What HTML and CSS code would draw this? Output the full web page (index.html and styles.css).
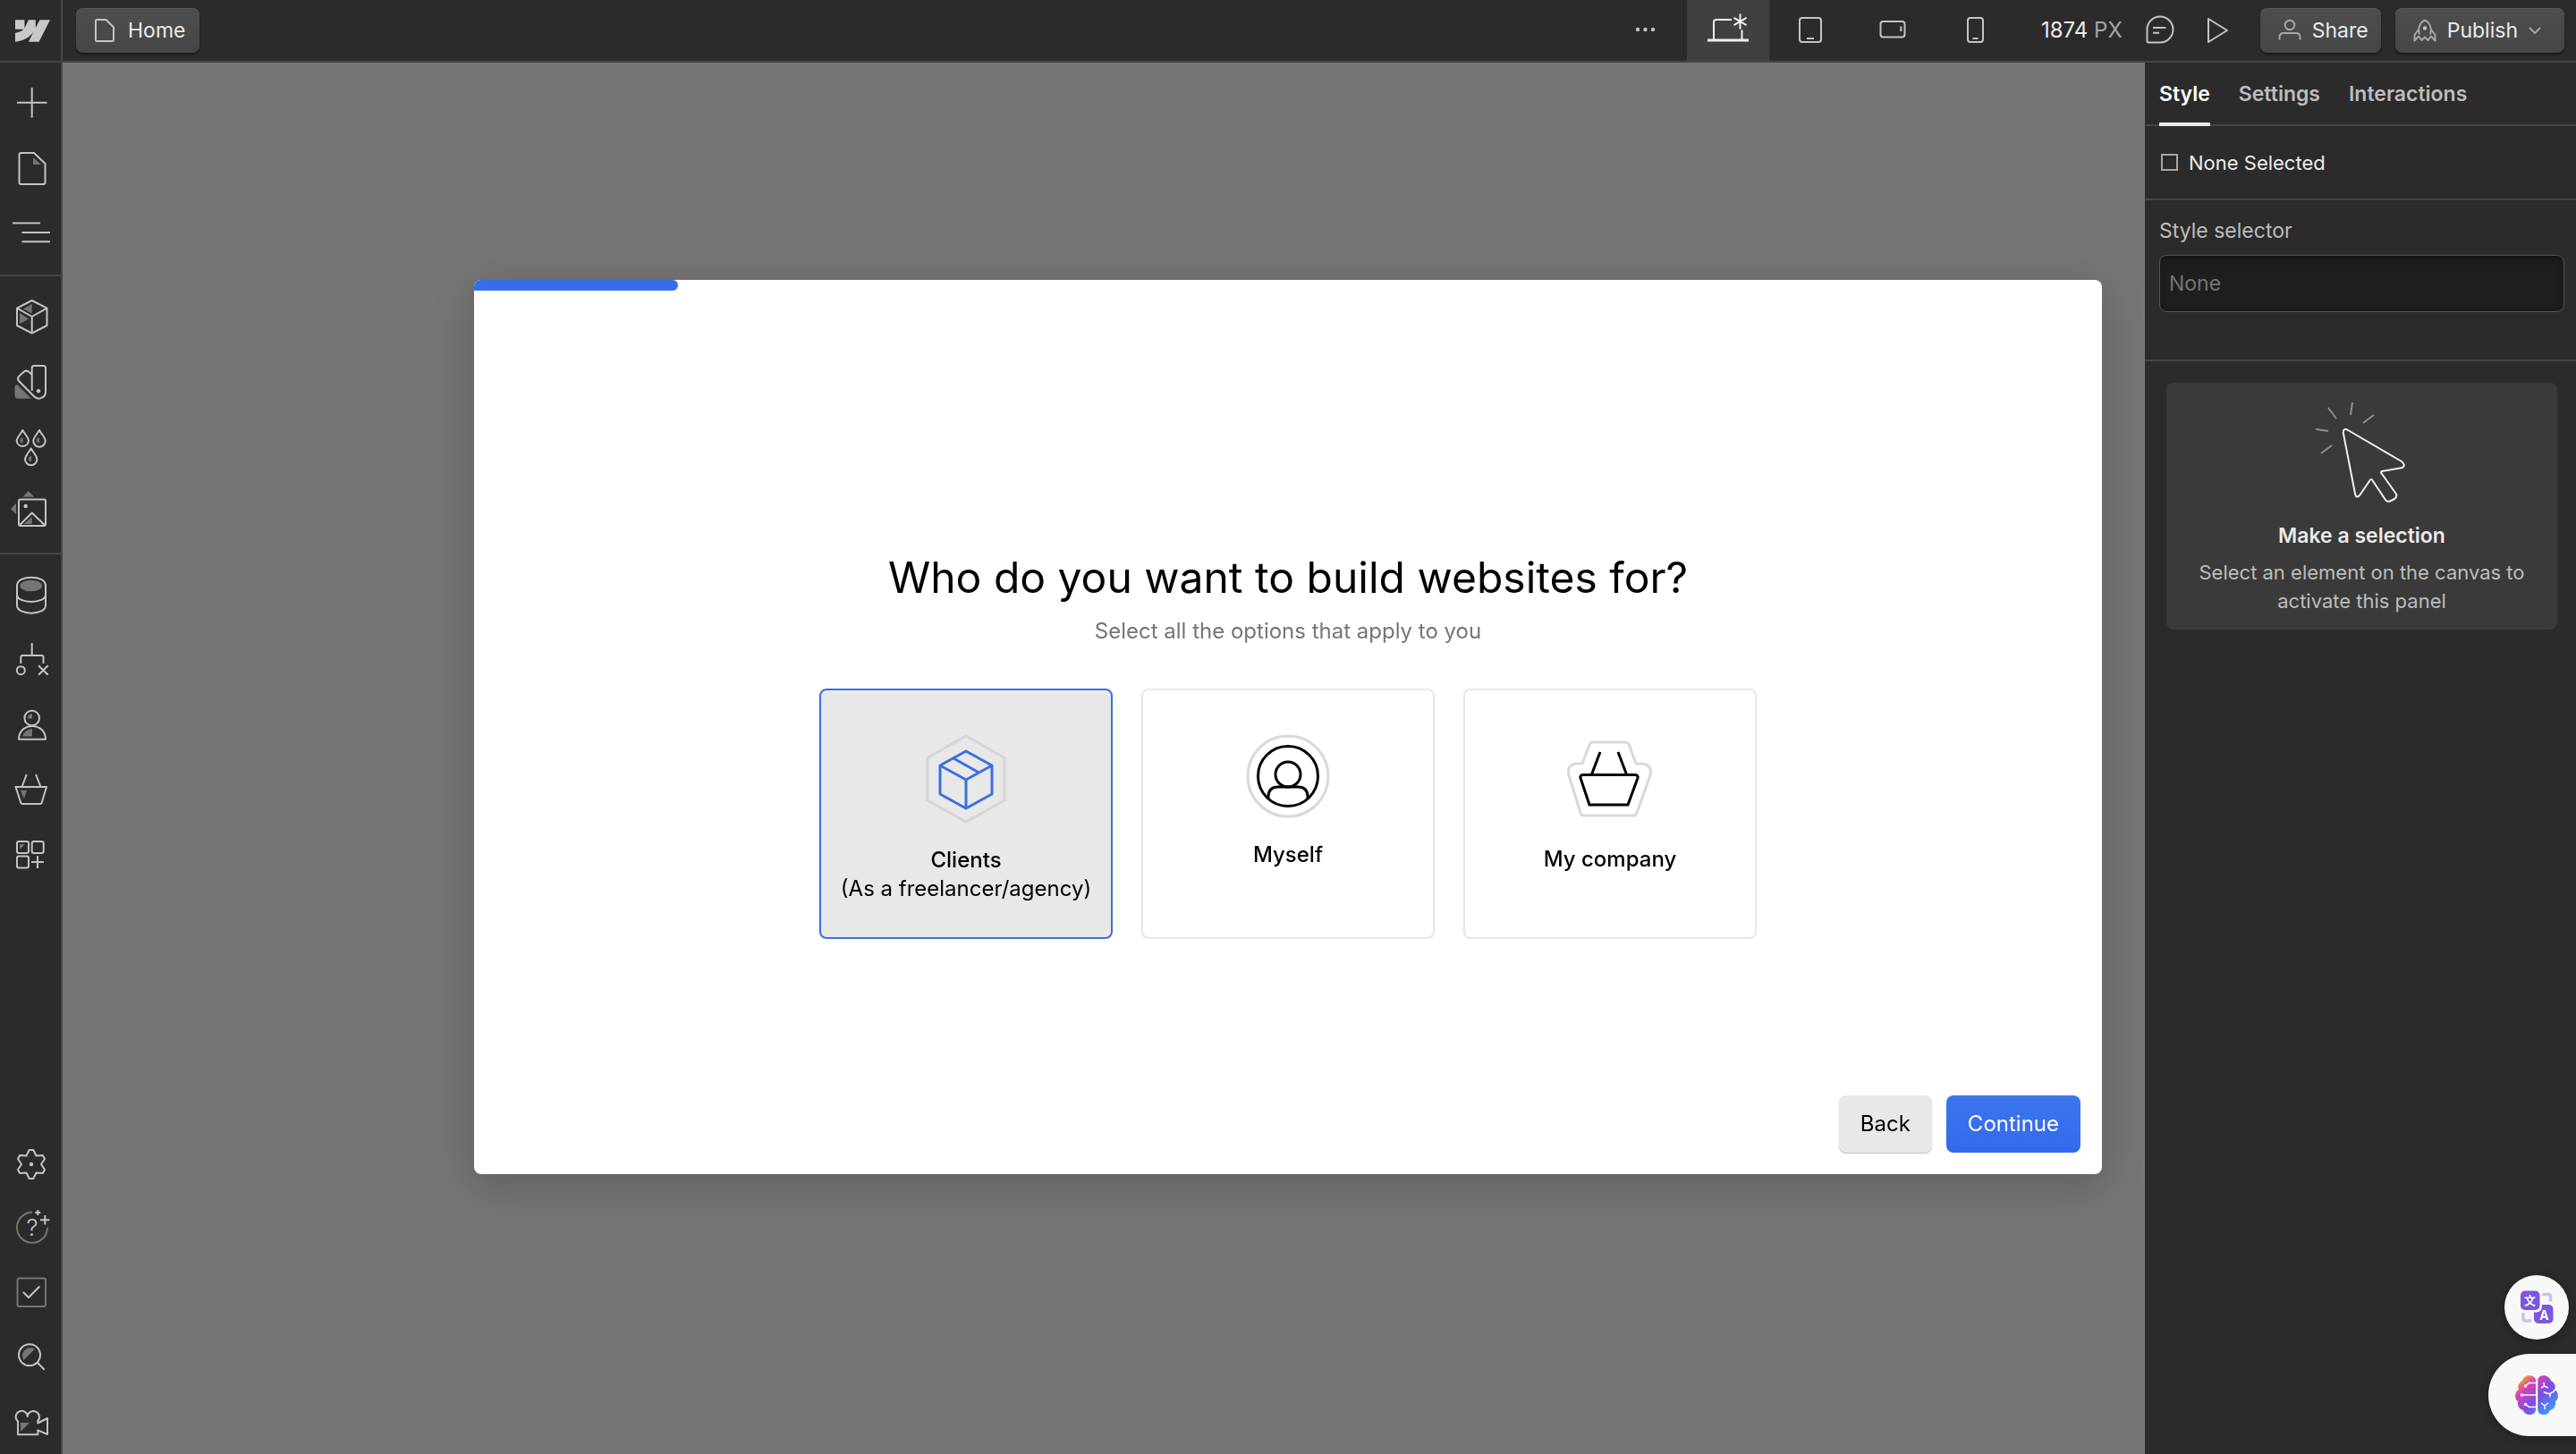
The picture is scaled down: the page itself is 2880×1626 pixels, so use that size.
FILE: index.html
```html
<!DOCTYPE html>
<html lang="en">
<head>
    <meta charset="UTF-8">
    <meta name="viewport" content="width=device-width, initial-scale=1.0">
    <title>Designer</title>
    <link rel="stylesheet" href="styles.css">
</head>
<body>
    <header class="topbar">
        <a class="logo" href="#" aria-label="Dashboard">
            <svg width="39" height="39" viewBox="0 0 24 24"><path fill="#c8c8c8" d="m24 4.515-7.658 14.97H9.149l3.205-6.204h-.144C9.566 16.713 5.621 18.973 0 19.485v-6.118s3.596-.213 5.71-2.435H0V4.515h6.417v5.278l.144-.001 2.622-5.277h4.854v5.244h.144l2.72-5.244H24Z"/></svg>
        </a>
        <button class="bar-button home">
            <svg class="icon" width="24" height="28" viewBox="0 0 24 28"><path d="M3 2H13.500L22 10.500V24.500Q22 26 20.500 26H3.500Q2 26 2 24.500V3.500Q2 2 3.500 2Z"/></svg>
            Home
        </button>

        <div class="breakpoints">
            <button aria-label="More"><svg class="icon" width="48" height="48" viewBox="0 0 48 48"><g class="dot"><circle cx="15" cy="23" r="2.200"/><circle cx="23.500" cy="23" r="2.200"/><circle cx="32" cy="23" r="2.200"/></g></svg></button>
            <button class="active" aria-label="Desktop"><svg class="icon" width="48" height="48" viewBox="0 0 48 48"><path d="M1 35H47" stroke-width="3"/><path d="M8 34V15Q8 12 11 12H28M39.500 23.500V34M37.500 5.500V22.500M30.500 9.800L44.500 18.200M44.500 9.800L30.500 18.200"/></svg></button>
            <button aria-label="Tablet"><svg class="icon" width="48" height="48" viewBox="0 0 48 48"><rect x="12" y="10" width="24" height="27" rx="3"/><path d="M20 33H28"/></svg></button>
            <button aria-label="Mobile landscape"><svg class="icon" width="48" height="48" viewBox="0 0 48 48"><rect x="10.500" y="14" width="27" height="17.500" rx="3"/><path d="M33.300 19.500V25"/></svg></button>
            <button aria-label="Mobile portrait"><svg class="icon" width="48" height="48" viewBox="0 0 48 48"><rect x="16" y="10" width="17" height="27" rx="3"/><path d="M21.500 33H27.500"/></svg></button>
        </div>

        <p class="canvas-width">1874 <span>PX</span></p>

        <div class="actions">
            <button class="plain" aria-label="Comments"><svg class="icon" width="36" height="36" viewBox="0 0 36 36"><path d="M5 31.500Q3.500 31.500 3.500 30V17A14.500 14.500 0 1 1 18 31.500ZM10 15H24.500M10 20.800H17"/></svg></button>
            <button class="plain" aria-label="Preview"><svg class="icon" width="36" height="36" viewBox="0 0 36 36"><path d="M8 5L29 18L8 31Z"/></svg></button>
        </div>
        <button class="bar-button share">
            <svg class="icon dim" width="26" height="26" viewBox="0 0 26 26"><circle cx="13" cy="7" r="5.300"/><path d="M1.500 23.500V20.500Q1.500 16 6 16H20Q24.500 16 24.500 20.500V23.500"/></svg>
            Share
        </button>
        <button class="bar-button publish">
            <svg class="icon dim" width="26" height="26" viewBox="0 0 26 26"><path d="M7 17.500C4.500 9 8.500 3.500 13 1.500C17.500 3.500 21.500 9 19 17.500M6.300 11.500L1.500 18V24.500L6 19.500L9.500 24L13 20.500L16.500 24L20 19.500L24.500 24.500V18L19.700 11.500"/><circle class="dot" cx="13" cy="10.500" r="2.200"/></svg>
            <span>Publish</span>
            <svg class="icon dim" width="14" height="10" viewBox="0 0 14 10"><path d="M1 2L7 8L13 2"/></svg>
        </button>
    </header>

    <div class="workspace">
        <nav class="sidebar">
            <div class="group">
                <button aria-label="Add"><svg class="icon" viewBox="0 0 48 48"><path d="M25.700 7V40.500M9 23.700H42.500"/></svg></button>
                <button aria-label="Pages"><svg class="icon" viewBox="0 0 48 48"><path d="M13.500 8H28L40.500 20V41Q40.500 43 38.500 43H13.500Q11.500 43 11.500 41V10Q11.500 8 13.500 8Z"/><path class="shade" d="M27 13V21H36Z"/></svg></button>
                <button aria-label="Navigator"><svg class="icon" viewBox="0 0 48 48"><path d="M4 14.500H35M14.500 25H46M14.500 35.300H46"/></svg></button>
            </div>
            <div class="group">
                <button aria-label="Components"><svg class="icon" viewBox="0 0 48 48"><path class="shade" d="M16 15.300L25.700 10V20.700ZM12 20V32.300L22.300 26.700Z"/><path d="M25.700 6L42.500 14.700V34L25.700 42.600L9 34V14.700ZM9 14.700L25.700 24L42.500 14.700M25.700 24V42.600"/></svg></button>
                <button aria-label="Variables"><svg class="icon" viewBox="0 0 48 48"><path class="shade" d="M6.500 31Q7 27 10 29L25 43.700H10Q6.500 43.700 6.500 40Z"/><path d="M28 7H38.500Q41 7 41 9.500V35.500A7.600 7.600 0 0 1 28 41.300L11 24Q9 21.500 11 19L17 13.500Q20 11.500 22.500 14L25.700 17V9.500Q25.700 7 28 7ZM25.700 16V35"/><circle class="dot" cx="33" cy="35.300" r="2.200"/></svg></button>
                <button aria-label="Style manager"><svg class="icon" viewBox="0 0 48 48"><path d="M15.300 7C18 12 22 15.500 22 19A6.700 6.700 0 0 1 8.700 19C8.700 15.500 12.600 12 15.300 7ZM34 7C36.700 12 40.700 15.500 40.700 19A6.700 6.700 0 0 1 27.300 19C27.300 15.500 31.300 12 34 7ZM24.700 27.500C27.400 32.500 31.400 36 31.400 39.500A6.700 6.700 0 0 1 18 39.500C18 36 22 32.500 24.700 27.500Z"/><path class="shade" d="M15.500 15V21.500C11.500 21.500 11 16.500 15.500 15ZM34 15V21.500C30 21.500 29.500 16.500 34 15ZM25 35.500V42C21 42 20.500 37 25 35.500Z"/></svg></button>
                <button aria-label="Assets"><svg class="icon" viewBox="0 0 48 48"><path class="shade" d="M15.300 9.700L21.700 3.300L28.300 9.700ZM8 16.700L2 23L8 29.300ZM16.700 40L25.700 32V40Z"/><rect x="11" y="12.500" width="30" height="29.500" rx="2"/><path d="M12 41.300L25.700 27.500L40 41.300"/><circle class="dot" cx="18.700" cy="20" r="2.200"/></svg></button>
            </div>
            <div class="group">
                <button aria-label="CMS"><svg class="icon" viewBox="0 0 48 48"><ellipse class="shade" cx="24.700" cy="14" rx="12.300" ry="6.300"/><path d="M9 14C9 1.500 41 1.500 41 14V36C41 47.500 9 47.500 9 36ZM9 24C9 34.500 41 34.500 41 24"/></svg></button>
                <button aria-label="Logic"><svg class="icon" viewBox="0 0 48 48"><path d="M25.700 6V20M13.300 29V22Q13.300 20 15.300 20H36.500Q38.500 20 38.500 22V29M33 31.300L43.700 41.700M43.700 31.300L33 41.700"/><circle cx="13.300" cy="36.700" r="4.500"/></svg></button>
                <button aria-label="Users"><svg class="icon" viewBox="0 0 48 48"><circle cx="25.700" cy="18" r="8.300"/><path d="M11 41.700C11.500 22 40.500 22 41 41.700Z"/><path class="shade" d="M26 13V18.500H20.500Q21 14 26 13ZM26 30V38.500H15Q17 31 26 30Z"/></svg></button>
                <button aria-label="Ecommerce"><svg class="icon" viewBox="0 0 48 48"><path d="M19.700 9L14.700 22.500M30 9L35.300 22.500M7.500 23H42L36.500 41Q36.300 42 35 42H15Q13.700 42 13.400 41Z"/><path class="shade" d="M12.700 26.700H20L17 36.300Z"/></svg></button>
                <button aria-label="Apps"><svg class="icon" viewBox="0 0 48 48"><rect x="9" y="12" width="13" height="13" rx="2"/><rect x="25.700" y="12" width="13" height="13" rx="2"/><rect x="9" y="28.500" width="13" height="13" rx="2"/><path d="M32 28V42M25 35H39"/><path class="shade" d="M12 15H18L12 21Z"/></svg></button>
            </div>
            <div class="group bottom">
                <button aria-label="Settings"><svg class="icon" viewBox="0 0 48 48"><path d="M22.700 8H27.300L30.500 14.500L37.800 14L40 18L36 24L40 30L37.800 34L30.500 33.500L27.300 40H22.700L19.500 33.500L12.200 34L10 30L14 24L10 18L12.200 14L19.500 14.500Z"/><circle class="dot" cx="25" cy="24" r="2.200"/></svg></button>
                <button aria-label="Help"><svg class="icon" viewBox="0 0 48 48"><path class="faint" d="M26 5.700A17 17 0 1 0 43 22.700"/><path d="M32.300 3V9M29.300 6H35.300M40.300 9V19.500M35 14.300H45.500"/><text x="26" y="32" text-anchor="middle">?</text></svg></button>
                <button aria-label="Audit"><svg class="icon" viewBox="0 0 48 48"><rect class="faint" x="9.500" y="7.500" width="31.500" height="31.500" rx="2"/><path d="M16 23L22 29L34.300 16.500"/></svg></button>
                <button aria-label="Search"><svg class="icon" viewBox="0 0 48 48"><path class="shade" d="M16.500 27Q13 20 18 15.500Q23 11 29 14.500Z"/><circle cx="23" cy="21.300" r="12"/><path d="M31.500 29.500L39.700 37.700"/></svg></button>
                <button aria-label="Video tutorials"><svg class="icon" viewBox="0 0 48 48"><path d="M10 23.500A6.600 6.600 0 1 1 20.800 18A6.600 6.600 0 1 1 32.300 23V25.500L43 20V38L32.300 33.300V38.300H10Z"/><path class="shade" d="M13 25H23L13 35Z"/></svg></button>
            </div>
        </nav>

        <main class="canvas"></main>

        <aside class="panel">
            <div class="tabs">
                <button class="active">Style</button>
                <button>Settings</button>
                <button>Interactions</button>
            </div>
            <div class="selected"><span class="square"></span>None Selected</div>
            <div class="selector">
                <label for="style-selector">Style selector</label>
                <input id="style-selector" type="text" placeholder="None">
            </div>
            <div class="empty-card">
                <svg width="104" height="114" viewBox="2 0 104 114" fill="none">
                    <g stroke="#8f8f8f" stroke-width="2"><path d="M16 8L25 20M43 2L41 16M67 16L55 25M2 32L16 34M20 50L8 59"/></g>
                    <path stroke="#f0f0f0" stroke-width="2" stroke-linejoin="round" d="M33 37C32 32 35 31 38 33L98 68Q103 72 99 75L76 79Q74 80 76 82L91 103Q94 107 90 110L86 112Q82 114 80 111L66 90Q64 86 62 90L51 106Q47 110 46 104Z"/>
                </svg>
                <h2>Make a selection</h2>
                <p>Select an element on the canvas to activate this panel</p>
            </div>
        </aside>
    </div>

    <section class="modal" role="dialog" aria-labelledby="question">
        <div class="progress"></div>
        <div class="modal-content">
            <h1 id="question">Who do you want to build websites for?</h1>
            <p class="hint">Select all the options that apply to you</p>
            <div class="options">
                <button class="option chosen" aria-pressed="true">
                    <svg width="90" height="100" viewBox="0 0 90 100" fill="none" stroke-width="3">
                        <path stroke="#d6d6d6" stroke-width="3" d="M45 2L88 26.500V74L45 98L2 74V26.500Z"/>
                        <path stroke="#3b6fe0" stroke-linejoin="round" d="M45 19L74 35V67L45 83L16 67V35ZM16 35L45 51L74 35M45 51V83M31 27L59.500 43"/>
                    </svg>
                    <strong>Clients</strong>
                    <span>(As a freelancer/agency)</span>
                </button>
                <button class="option" aria-pressed="false">
                    <svg width="94" height="94" viewBox="0 0 94 94" fill="none" stroke="#000" stroke-width="3">
                        <circle cx="47" cy="47" r="45" stroke="#d9d9d9"/>
                        <circle cx="47" cy="47" r="33.500"/>
                        <circle cx="47" cy="45" r="14"/>
                        <path d="M25 72V70Q25 59 36 59H58Q69 59 69 70V72"/>
                    </svg>
                    <strong>Myself</strong>
                </button>
                <button class="option" aria-pressed="false">
                    <svg width="96" height="99" viewBox="1 2 96 99" fill="none" stroke="#000" stroke-width="3">
                        <path stroke="#d9d9d9" stroke-linejoin="round" d="M29 11H66Q69 11 70.500 14L78 35H84Q97 36 94 48L79 90Q78 93 75 93H20Q17 93 16 90L3 48Q0 37 11 35H18L26 14Q27 11 29 11Z"/>
                        <path d="M38 22L28.500 47M58 22L67.500 47M19 47.500H77Q81 48 80 51L69 81H26L16 51Q15 48 19 47.500Z"/>
                    </svg>
                    <strong>My company</strong>
                </button>
            </div>
        </div>
        <footer class="modal-footer">
            <button class="back">Back</button>
            <button class="continue">Continue</button>
        </footer>
    </section>

    <div class="widgets">
        <button class="translate" aria-label="Translate">
            <svg width="72" height="72" viewBox="0 0 72 72">
                <path d="M42.500 21.500H49Q51.500 21.500 51.500 24V29.500M21 42V48.500Q21 51 23.500 51H30" fill="none" stroke="#cdbdf3" stroke-width="3.500"/>
                <rect x="33" y="33" width="21.500" height="21" rx="5" fill="#7d56e0"/>
                <rect x="16" y="15.500" width="26" height="26" rx="6" fill="#f8f8f8"/>
                <rect x="18" y="17.500" width="21.500" height="21.500" rx="5" fill="#7d56e0"/>
                <text x="28.500" y="33" font-size="13">文</text>
                <text x="44.500" y="50" font-size="14">A</text>
            </svg>
        </button>
        <button class="brain" aria-label="Assistant">
            <svg width="48" height="44" viewBox="0 0 48 44">
                <defs>
                    <linearGradient id="brain-fill" x1="0" y1="0" x2="1" y2="1">
                        <stop offset="0.100" stop-color="#f5a524"/>
                        <stop offset="0.280" stop-color="#d940b8"/>
                        <stop offset="0.550" stop-color="#7b50e2"/>
                        <stop offset="0.850" stop-color="#3f93f5"/>
                    </linearGradient>
                </defs>
                <path fill="url(#brain-fill)" d="M23 5C22 -1 10 -2 8 6C4 8 2 12 4 16C-1 18 -1 27 3 29C2 34 5 38 9 39C11 46 23 46 23 38ZM25.300 5C26 -1 37 -2 40 6C44 8 46 12 44 16C49 18 49 27 45 29C46 34 43 38 39 39C37 46 25.300 46 25.300 38Z"/>
                <g fill="none" stroke="#f8f8f8" stroke-width="1.500"><path d="M23 8.500H15.500L12 11.500M23 22H8M23 35.500H15.500L12 32.500M29 14L32.500 12L32 8M32.500 12L37 14M32 18.500Q36 21 39 20.500V24.500M39 20.500Q43 19 45 16M29 31L33 34V38M33 34L37 31"/></g>
                <g fill="#f8f8f8"><circle cx="11.500" cy="12" r="1.800"/><circle cx="7.500" cy="22" r="1.800"/><circle cx="11.500" cy="32.500" r="1.800"/></g>
            </svg>
        </button>
    </div>
</body>
</html>
```

FILE: styles.css
```css
* {
    box-sizing: border-box;
}
body {
    margin: 0;
    height: 100vh;
    display: flex;
    flex-direction: column;
    overflow: hidden;
    background-color: #2b2b2b;
    color: #ebebeb;
    font-family: Inter, "Liberation Sans", sans-serif;
    font-size: 23px;
    line-height: 32px;
}
h1, h2, p {
    margin: 0;
}
button {
    border: none;
    padding: 0;
    background: none;
    color: inherit;
    font: inherit;
    cursor: pointer;
}
svg {
    display: block;
    flex-shrink: 0;
}

/* Line icons */
.icon {
    fill: none;
    stroke: #c4c4c4;
    stroke-width: 2;
    stroke-linejoin: round;
}
.icon.dim {
    stroke: #a6a6a6;
}
.icon .dot {
    fill: #c4c4c4;
    stroke: none;
}
.icon .shade {
    fill: #757575;
    stroke: none;
}
.icon .faint {
    stroke: #757575;
}
.icon text {
    fill: #c4c4c4;
    stroke: none;
    font-size: 26px;
    font-weight: 300;
}

/* Top bar */
.topbar {
    display: flex;
    align-items: center;
    height: 70px;
    padding-right: 13px;
    border-bottom: 2px solid #464646;
}
.logo {
    display: flex;
    align-items: center;
    justify-content: center;
    align-self: stretch;
    width: 70px;
    padding-left: 4px;
    border-right: 2px solid #464646;
}
.bar-button {
    display: flex;
    align-items: center;
    height: 50px;
    padding: 0 16px 0 20px;
    gap: 12px;
    border-radius: 8px;
    background: linear-gradient(#4d4d4d, #464646);
    box-shadow: inset 0 1px 0 #5a5a5a, 0 2px 2px #1a1a1a;
}
.home {
    margin-left: 15px;
    gap: 14px;
}
.share {
    padding-right: 14px;
}
.publish {
    margin-left: 16px;
    padding-right: 26px;
}
.breakpoints {
    display: flex;
    align-self: stretch;
    margin-left: auto;
}
.breakpoints button {
    display: flex;
    align-items: center;
    justify-content: center;
    width: 92px;
}
.breakpoints .active {
    background-color: #404040;
}
.breakpoints .active .icon {
    stroke: #f0f0f0;
}
.canvas-width {
    margin-left: 28px;
    font-size: 24px;
}
.canvas-width span {
    color: #a6a6a6;
}
.actions {
    display: flex;
    gap: 28px;
    margin: 0 30px 0 24px;
}

/* Left sidebar */
.workspace {
    flex: 1;
    display: flex;
    min-height: 0;
}
.sidebar {
    display: flex;
    flex-direction: column;
    width: 70px;
    border-right: 2px solid #464646;
}
.group {
    padding: 9px 0 12px;
    border-bottom: 2px solid #464646;
}
.group:nth-child(n+3) {
    border-bottom: none;
}
.group.bottom {
    margin-top: auto;
    padding: 0;
}
.group button {
    display: flex;
    align-items: center;
    justify-content: center;
    width: 100%;
    height: 72px;
}
.group .icon {
    width: 48px;
    height: 48px;
}
.canvas {
    flex: 1;
    background-color: #757575;
}

/* Right panel */
.panel {
    width: 482px;
}
.tabs {
    display: flex;
    gap: 32px;
    height: 71px;
    padding: 0 16px;
    border-bottom: 2px solid #464646;
}
.tabs button {
    height: 71px;
    padding-top: 2px;
    border-bottom: 4px solid transparent;
    color: #bdbdbd;
    font-weight: 600;
}
.tabs .active {
    border-color: #ebebeb;
    color: #fff;
}
.selected {
    display: flex;
    align-items: center;
    gap: 12px;
    height: 83px;
    padding: 0 18px;
    border-bottom: 2px solid #464646;
    font-size: 22px;
}
.square {
    width: 19px;
    height: 19px;
    border: 2px solid #a6a6a6;
}
.selector {
    display: flex;
    flex-direction: column;
    gap: 11px;
    height: 180px;
    padding: 18px 13px 0 16px;
    border-bottom: 2px solid #464646;
}
.selector label {
    color: #bdbdbd;
}
.selector input {
    height: 64px;
    padding: 0 10px;
    border: 1px solid #555;
    border-radius: 8px;
    background-color: #1e1e1e;
    box-shadow: inset 0 4px 6px #171717;
    color: #ebebeb;
    font: inherit;
}
.selector input::placeholder {
    color: #757575;
    opacity: 1;
}
.empty-card {
    display: flex;
    flex-direction: column;
    align-items: center;
    margin: 24px 21px 0 24px;
    padding: 20px 32px 16px;
    border-radius: 8px;
    background-color: #3a3a3a;
    text-align: center;
}
.empty-card h2 {
    margin: 21px 0 9px;
    font-size: 23px;
    font-weight: 600;
}
.empty-card p {
    color: #bdbdbd;
    font-size: 22px;
}

/* Onboarding modal */
.modal {
    position: fixed;
    top: 50%;
    left: 50%;
    transform: translate(-50%, -50%);
    display: flex;
    flex-direction: column;
    width: 1820px;
    max-width: 100%;
    min-height: 1000px;
    border-radius: 8px;
    background-color: #fff;
    box-shadow: 0 12px 48px rgba(0, 0, 0, 0.2);
    color: #000;
    font-size: 24px;
    overflow: hidden;
}
.progress {
    width: 12.5%;
    height: 12px;
    border-radius: 0 6px 6px 0;
    background-color: #346cec;
}
.modal-content {
    flex: 1;
    display: flex;
    flex-direction: column;
    align-items: center;
    justify-content: center;
    padding-top: 114px;
}
.modal-content h1 {
    font-size: 48px;
    font-weight: 400;
    line-height: 64px;
}
.hint {
    margin: 12px 0 48px;
    color: #757575;
}
.options {
    display: grid;
    grid-template-columns: repeat(3, 328px);
    gap: 32px;
}
.option {
    display: flex;
    flex-direction: column;
    align-items: center;
    height: 280px;
    padding-top: 49px;
    border: 2px solid #e6e6e6;
    border-radius: 8px;
    white-space: nowrap;
}
.option.chosen {
    border-color: #3b6fe0;
    background-color: #e8e8e8;
}
.option strong {
    margin-top: 25px;
    font-weight: 500;
}
.modal-footer {
    display: flex;
    justify-content: flex-end;
    gap: 16px;
    padding: 0 24px 24px;
}
.modal-footer button {
    height: 64px;
    padding: 0 24px;
    border-radius: 8px;
}
.back {
    background-color: #e8e8e8;
    box-shadow: 0 1px 1px #bbb;
}
.continue {
    background: linear-gradient(#3d74ef, #336aea);
    color: #fff;
}

/* Floating extension buttons */
.widgets {
    position: fixed;
    right: 0;
    bottom: 20px;
    display: flex;
    flex-direction: column;
    align-items: flex-end;
    gap: 16px;
}
.translate {
    margin-right: 8px;
    border-radius: 50%;
    background-color: #f8f8f8;
    box-shadow: 0 2px 12px rgba(0, 0, 0, 0.3);
}
.translate text {
    fill: #fff;
    font-family: Inter, "Noto Sans CJK SC", sans-serif;
    font-weight: 700;
    text-anchor: middle;
}
.brain {
    padding: 24px 20px 24px 30px;
    border-radius: 46px 0 0 46px;
    background-color: #f8f8f8;
    box-shadow: 0 2px 12px rgba(0, 0, 0, 0.3);
}
```
